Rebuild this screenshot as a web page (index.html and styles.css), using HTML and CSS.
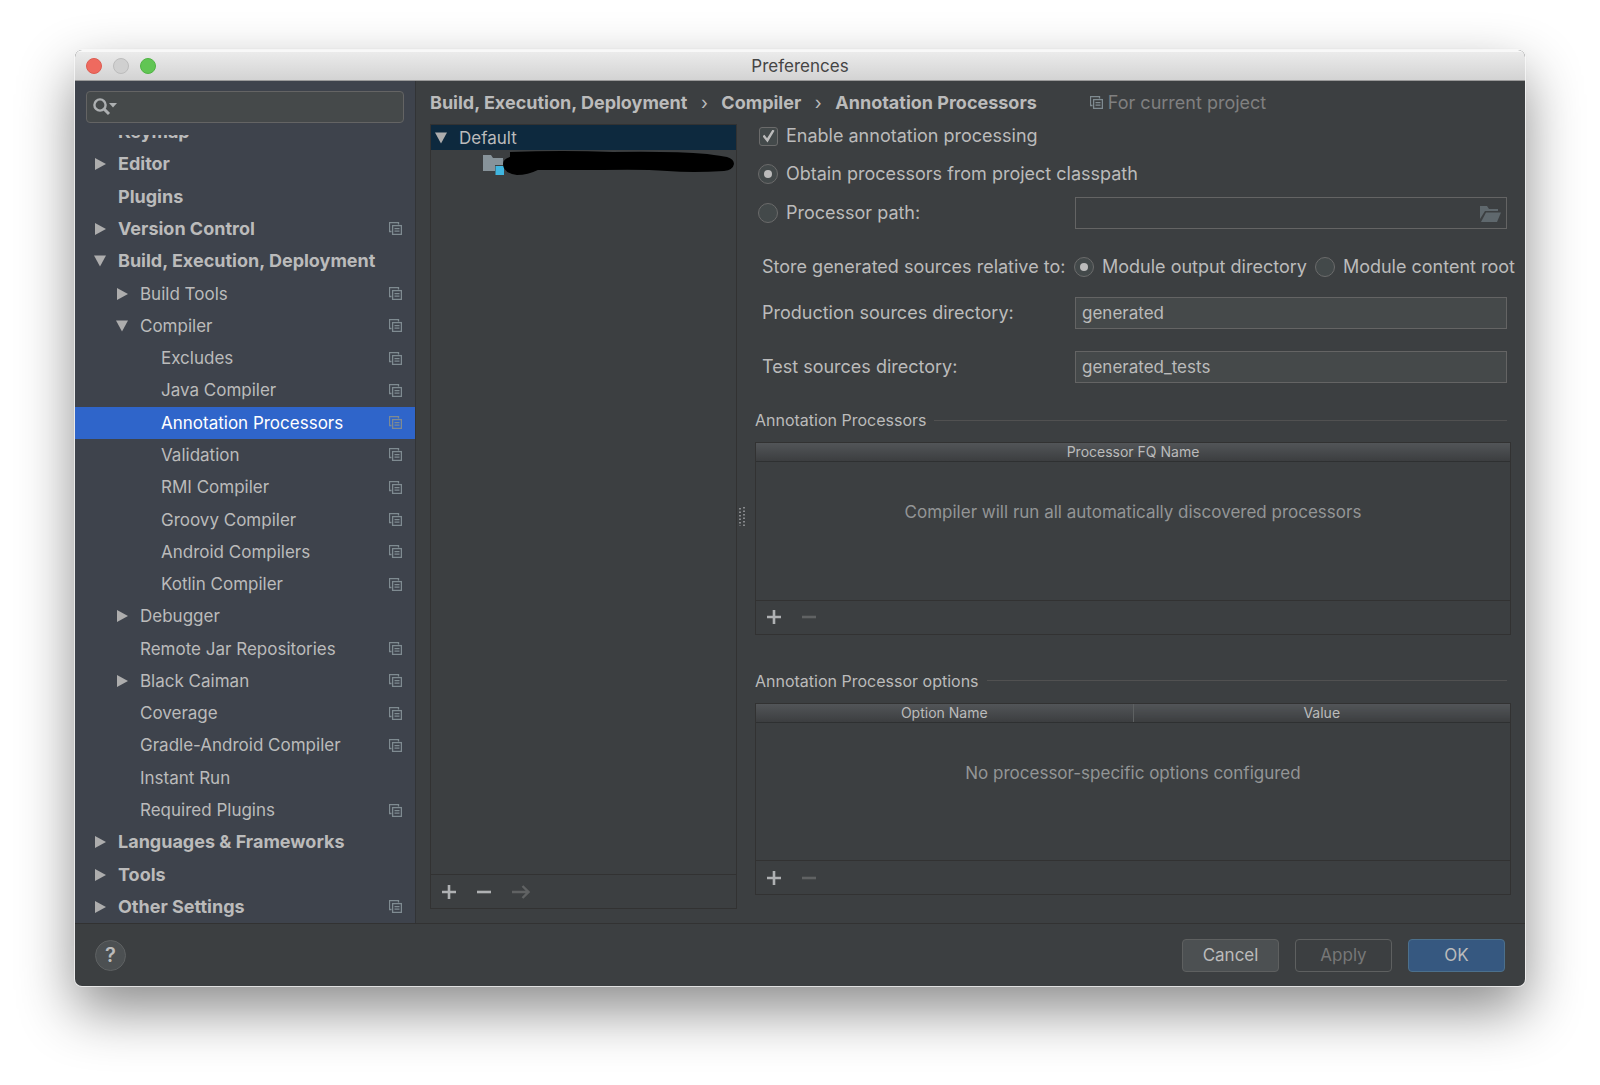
FILE: index.html
```html
<!DOCTYPE html>
<html lang="en">
<head>
<meta charset="utf-8">
<title>Preferences</title>
<link rel="stylesheet" href="styles.css">
</head>
<body>
<svg class="sprite" aria-hidden="true">
  <symbol id="copy" viewBox="0 0 13 13">
    <path d="M9.5 2.5V.5H.5v9h2" fill="none" stroke="currentColor" stroke-width="1.3"/>
    <rect x="3.6" y="3.6" width="8.8" height="8.8" fill="none" stroke="currentColor" stroke-width="1.3"/>
    <path d="M5.5 6.7h5M5.5 9.2h5" stroke="currentColor" stroke-width="1.2"/>
  </symbol>
  <symbol id="right" viewBox="0 0 12 12"><path d="M1 0l11 6-11 6z" fill="currentColor"/></symbol>
  <symbol id="down" viewBox="0 0 12 12"><path d="M0 .5h12L6 11.5z" fill="currentColor"/></symbol>
  <symbol id="plus" viewBox="0 0 14 14"><path d="M7 0v14M0 7h14" stroke="currentColor" stroke-width="2.6"/></symbol>
  <symbol id="minus" viewBox="0 0 14 14"><path d="M0 7h14" stroke="currentColor" stroke-width="2.6"/></symbol>
</svg>

<main class="window">
  <header class="titlebar">
    <div class="lights">
      <button class="light close" aria-label="Close"></button>
      <button class="light minimize" aria-label="Minimize" disabled></button>
      <button class="light maximize" aria-label="Zoom"></button>
    </div>
    <h1 class="title">Preferences</h1>
  </header>

  <div class="content">
    <nav class="sidebar">
      <label class="search">
        <svg class="search-icon" viewBox="0 0 24 18" aria-hidden="true">
          <circle cx="7" cy="7" r="5.6" fill="none" stroke="currentColor" stroke-width="2.4"/>
          <path d="M11 11l5 5" stroke="currentColor" stroke-width="3"/>
          <path d="M16 5h8l-4 4.5z" fill="currentColor"/>
        </svg>
        <input class="search-input" type="text" aria-label="Search settings">
      </label>
      <div class="tree-scroll">
        <ul class="tree">
          <li class="node top">Keymap</li>
          <li class="node top"><svg class="arrow"><use href="#right"/></svg>Editor</li>
          <li class="node top">Plugins</li>
          <li class="node top"><svg class="arrow"><use href="#right"/></svg>Version Control<svg class="scope"><use href="#copy"/></svg></li>
          <li class="node top"><svg class="arrow"><use href="#down"/></svg>Build, Execution, Deployment</li>
          <li class="node mid"><svg class="arrow"><use href="#right"/></svg>Build Tools<svg class="scope"><use href="#copy"/></svg></li>
          <li class="node mid"><svg class="arrow"><use href="#down"/></svg>Compiler<svg class="scope"><use href="#copy"/></svg></li>
          <li class="node leaf">Excludes<svg class="scope"><use href="#copy"/></svg></li>
          <li class="node leaf">Java Compiler<svg class="scope"><use href="#copy"/></svg></li>
          <li class="node leaf selected">Annotation Processors<svg class="scope"><use href="#copy"/></svg></li>
          <li class="node leaf">Validation<svg class="scope"><use href="#copy"/></svg></li>
          <li class="node leaf">RMI Compiler<svg class="scope"><use href="#copy"/></svg></li>
          <li class="node leaf">Groovy Compiler<svg class="scope"><use href="#copy"/></svg></li>
          <li class="node leaf">Android Compilers<svg class="scope"><use href="#copy"/></svg></li>
          <li class="node leaf">Kotlin Compiler<svg class="scope"><use href="#copy"/></svg></li>
          <li class="node mid"><svg class="arrow"><use href="#right"/></svg>Debugger</li>
          <li class="node mid">Remote Jar Repositories<svg class="scope"><use href="#copy"/></svg></li>
          <li class="node mid"><svg class="arrow"><use href="#right"/></svg>Black Caiman<svg class="scope"><use href="#copy"/></svg></li>
          <li class="node mid">Coverage<svg class="scope"><use href="#copy"/></svg></li>
          <li class="node mid">Gradle-Android Compiler<svg class="scope"><use href="#copy"/></svg></li>
          <li class="node mid">Instant Run</li>
          <li class="node mid">Required Plugins<svg class="scope"><use href="#copy"/></svg></li>
          <li class="node top"><svg class="arrow"><use href="#right"/></svg>Languages &amp; Frameworks</li>
          <li class="node top"><svg class="arrow"><use href="#right"/></svg>Tools</li>
          <li class="node top"><svg class="arrow"><use href="#right"/></svg>Other Settings<svg class="scope"><use href="#copy"/></svg></li>
        </ul>
      </div>
    </nav>

    <section class="page">
      <div class="crumbs">
        <span>Build, Execution, Deployment</span><span class="sep">›</span>
        <span>Compiler</span><span class="sep">›</span>
        <span>Annotation Processors</span>
        <span class="for-project"><svg class="scope-icon"><use href="#copy"/></svg>For current project</span>
      </div>

      <div class="columns">
        <div class="profiles">
          <div class="profile"><svg class="arrow-icon"><use href="#down"/></svg>Default</div>
          <div class="module">
            <svg class="module-icon" viewBox="0 0 22 20" aria-hidden="true">
              <path d="M0 0h8l2 3h10v7h-8v6H0z" fill="#87939a"/>
              <rect x="12.500" y="11" width="8.500" height="9" fill="#40b6e0"/>
            </svg>
            <svg class="redaction" viewBox="0 0 232 24" preserveAspectRatio="none" aria-hidden="true">
              <path d="M7 1Q60-1 110 1Q170 0 205 3Q220 5 225 6Q232 8 232 13Q231 19 222 20Q190 22 165 20Q140 18 100 19H35Q25 24 14 24Q0 22 0 13Q0 8 7 6z" fill="#000"/>
            </svg>
          </div>
          <div class="toolbar">
            <button class="tool" aria-label="Add profile"><svg class="tool-icon"><use href="#plus"/></svg></button>
            <button class="tool" aria-label="Remove profile"><svg class="tool-icon"><use href="#minus"/></svg></button>
            <button class="tool" aria-label="Move to" disabled><svg class="move-icon" viewBox="0 0 18 14"><path d="M0 7h16M10.500 1l6 6-6 6" fill="none" stroke="currentColor" stroke-width="2.400"/></svg></button>
          </div>
        </div>

        <div class="splitter"><svg class="grip" viewBox="0 0 6 20" aria-hidden="true"><path d="M1 1v18M5 0v20" stroke="#a0a3a5" stroke-width="1.500" stroke-dasharray="1.500 2"/></svg></div>

        <form class="form">
          <label class="choice enable"><input class="check" type="checkbox" checked>Enable annotation processing</label>
          <label class="choice obtain"><input class="radio" type="radio" name="source" checked>Obtain processors from project classpath</label>
          <div class="field path">
            <label class="choice"><input class="radio" type="radio" name="source">Processor path:</label>
            <div class="browse">
              <input class="text" type="text" aria-label="Processor path" disabled>
              <svg class="folder-icon" viewBox="0 0 21 16" aria-hidden="true"><path d="M0 0h7l2 3h9v2H5L0 13z" fill="#5f686d"/><path d="M6 6.500h15L17 16H1z" fill="#5f686d"/></svg>
            </div>
          </div>
          <div class="field store" role="group" aria-labelledby="store">
            <span class="caption" id="store">Store generated sources relative to:</span>
            <div class="options">
              <label class="choice"><input class="radio" type="radio" name="relative" checked>Module output directory</label>
              <label class="choice"><input class="radio" type="radio" name="relative">Module content root</label>
            </div>
          </div>
          <div class="field production">
            <label class="caption" for="production">Production sources directory:</label>
            <input class="text" id="production" type="text" value="generated">
          </div>
          <div class="field tests">
            <label class="caption" for="tests">Test sources directory:</label>
            <input class="text" id="tests" type="text" value="generated_tests">
          </div>

          <h2 class="group">Annotation Processors</h2>
          <div class="panel">
            <table class="grid">
              <thead><tr><th>Processor FQ Name</th></tr></thead>
              <tbody><tr><td>Compiler will run all automatically discovered processors</td></tr></tbody>
            </table>
            <div class="toolbar">
              <button class="tool" type="button" aria-label="Add processor"><svg class="tool-icon"><use href="#plus"/></svg></button>
              <button class="tool" type="button" aria-label="Remove processor" disabled><svg class="tool-icon"><use href="#minus"/></svg></button>
            </div>
          </div>

          <h2 class="group options-group">Annotation Processor options</h2>
          <div class="panel">
            <table class="grid">
              <thead><tr><th>Option Name</th><th>Value</th></tr></thead>
              <tbody><tr><td colspan="2">No processor-specific options configured</td></tr></tbody>
            </table>
            <div class="toolbar">
              <button class="tool" type="button" aria-label="Add option"><svg class="tool-icon"><use href="#plus"/></svg></button>
              <button class="tool" type="button" aria-label="Remove option" disabled><svg class="tool-icon"><use href="#minus"/></svg></button>
            </div>
          </div>
        </form>
      </div>
    </section>
  </div>

  <footer class="footer">
    <button class="help" aria-label="Help">?</button>
    <button class="button">Cancel</button>
    <button class="button" disabled>Apply</button>
    <button class="button primary">OK</button>
  </footer>
</main>
</body>
</html>
```

FILE: styles.css
```css
* { box-sizing: border-box; }

body {
  margin: 0;
  min-height: 100vh;
  padding: 50px 75px 99px;
  display: flex;
  background: #fff;
  color: #bbb;
  font: 17px/24px Inter, "Liberation Sans", sans-serif;
}

button, input {
  margin: 0;
  padding: 0;
  border: 0;
  background: none;
  color: inherit;
  font: inherit;
}

.sprite { position: absolute; width: 0; height: 0; }

.window {
  flex: 1;
  min-width: 0;
  display: flex;
  flex-direction: column;
  overflow: hidden;
  border-radius: 7px;
  background: #3c3f41;
  box-shadow: 0 0 0 1px rgba(255, 255, 255, .7), 0 0 2px rgba(0, 0, 0, .2), 0 24px 56px rgba(0, 0, 0, .46);
}

/* Title bar */
.titlebar {
  display: grid;
  grid-template-columns: 1fr auto 1fr;
  align-items: center;
  height: 31px;
  padding: 0 11px;
  border-top: 2px solid #f8f8f8;
  border-bottom: 1px solid #9a9a9a;
  background: linear-gradient(#ebebeb, #d3d3d3);
}
.lights { display: flex; gap: 11px; }
.light { width: 16px; height: 16px; border: 1px solid; border-radius: 50%; }
.close { background: #ee6a5f; border-color: #dd5c51; }
.minimize { background: #d0d0d0; border-color: #bcbcbc; }
.maximize { background: #61c554; border-color: #50b444; }
.title { margin: 0; color: #454545; font-size: 17px; font-weight: 400; }

.content { flex: 1; display: flex; }

/* Settings tree */
.sidebar {
  width: 341px;
  flex: none;
  display: flex;
  flex-direction: column;
  padding-top: 10px;
  border-right: 1px solid #323436;
  background: #3e434c;
}
.search {
  display: flex;
  align-items: center;
  height: 32px;
  margin: 0 11px 12px;
  padding: 0 6px;
  gap: 6px;
  border: 1px solid #646464;
  border-radius: 4px;
  background: #45494a;
}
.search-icon { width: 24px; height: 18px; color: #adb0b2; }
.search-input { flex: 1; min-width: 0; outline: 0; }
.tree-scroll { flex: 1; display: flex; flex-direction: column; overflow: hidden; }
.tree {
  flex: 1;
  display: flex;
  flex-direction: column;
  margin: -19px 0 0;
  padding: 0;
  list-style: none;
}
.node {
  flex: 1;
  display: flex;
  align-items: center;
  padding-right: 13px;
  min-height: 24px;
  white-space: nowrap;
}
.top { padding-left: 43px; font-size: 18px; font-weight: 700; }
.mid { padding-left: 65px; }
.leaf { padding-left: 86px; }
.selected { background: #2f65ca; color: #fff; }
.arrow { width: 12px; height: 12px; margin: 0 12px 0 -24px; color: #adadad; }
.scope { width: 13px; height: 13px; margin-left: auto; color: #7f8b91; }

/* Page */
.page { flex: 1; min-width: 0; display: flex; flex-direction: column; padding: 0 14px 14px 14px; }
.crumbs {
  display: flex;
  align-items: center;
  height: 43px;
  font-size: 18px;
  font-weight: 700;
  white-space: nowrap;
}
.sep { width: 34px; text-align: center; font-weight: 400; }
.for-project {
  display: flex;
  align-items: center;
  gap: 5px;
  margin-left: 53px;
  color: #808080;
  font-weight: 400;
}
.scope-icon { width: 13px; height: 13px; color: #7f8b91; }
.columns { flex: 1; display: flex; }

.profiles {
  width: 307px;
  flex: none;
  display: flex;
  flex-direction: column;
  border: 1px solid #323232;
}
.profile {
  display: flex;
  align-items: center;
  gap: 12px;
  height: 25px;
  padding-left: 4px;
  background: #0d293e;
}
.arrow-icon { width: 12px; height: 12px; color: #adadad; }
.module { flex: 1; display: flex; align-items: flex-start; padding: 1px 2px 0 52px; }
.module-icon { width: 22px; height: 20px; margin-top: 4px; flex: none; }
.redaction { flex: 1; min-width: 0; height: 24px; margin-left: -2px; }

.toolbar {
  display: flex;
  align-items: center;
  gap: 21px;
  height: 34px;
  padding-left: 11px;
  border-top: 1px solid #323232;
}
.tool { display: flex; color: #afb1b3; }
.tool:disabled { color: #606263; }
.tool-icon { width: 14px; height: 14px; }
.move-icon { width: 18px; height: 14px; }

.splitter { width: 18px; display: flex; align-items: center; padding-left: 2px; }
.grip { width: 6px; height: 20px; }

/* Form */
.form { flex: 1; min-width: 0; display: flex; flex-direction: column; }
.choice { display: flex; align-items: center; gap: 8px; white-space: nowrap; }
.choice, .caption { font-size: 18px; }
.check, .radio {
  appearance: none;
  flex: none;
  display: grid;
  place-items: center;
  border: 1px solid #6b6b6b;
  background: #43494a;
}
.check { width: 19px; height: 19px; border-radius: 3px; }
.radio { width: 20px; height: 20px; border-radius: 50%; }
.check:checked::after {
  content: "";
  width: 12px;
  height: 13px;
  background: #bbb;
  clip-path: polygon(0 52%, 16% 40%, 38% 68%, 84% 0, 100% 10%, 42% 100%);
}
.radio:checked::after { content: ""; width: 8px; height: 8px; border-radius: 50%; background: #bbb; }
.enable { height: 24px; margin-left: 4px; }
.obtain { height: 32px; margin: 10px 0 7px 3px; }
.field {
  display: grid;
  grid-template-columns: 313px 1fr;
  align-items: center;
  min-height: 32px;
  margin-right: 4px;
  padding-left: 7px;
  white-space: nowrap;
}
.path { grid-template-columns: 317px 1fr; padding-left: 3px; }
.store { grid-template-columns: 312px 1fr; margin: 22px 0 14px; }
.options { display: flex; gap: 8px; }
.tests { margin: 22px 4px 25px 0; }
.text {
  width: 100%;
  height: 32px;
  padding: 0 6px;
  border: 1px solid #646464;
  background: #45494a;
  outline: 0;
}
.text:disabled { background: #3c3f41; }
.browse { position: relative; }
.folder-icon { position: absolute; right: 6px; top: 9px; width: 21px; height: 16px; }

.group {
  display: flex;
  align-items: center;
  gap: 8px;
  margin: 0 4px 10px 0;
  font-size: 16px;
  font-weight: 400;
}
.group::after { content: ""; flex: 1; border-top: 1px solid #515151; }
.options-group { margin-top: 34px; }
.panel { border: 1px solid #323232; }
.grid { width: 100%; border-collapse: collapse; table-layout: fixed; }
.grid th {
  height: 18px;
  padding: 0;
  border-bottom: 1px solid #2e3031;
  background: linear-gradient(#525558, #3c3e40);
  font-size: 14px;
  font-weight: 400;
  line-height: 18px;
}
.grid th + th { border-left: 1px solid #5e6162; }
.grid td { height: 138px; padding: 26px 0 0; color: #939596; text-align: center; vertical-align: top; line-height: 48px; }

/* Footer */
.footer {
  display: flex;
  align-items: center;
  gap: 16px;
  height: 63px;
  padding: 0 20px;
  border-top: 1px solid #323232;
}
.help {
  width: 31px;
  height: 31px;
  margin-right: auto;
  border: 1px solid #5e6162;
  border-radius: 50%;
  background: #4c5052;
  font-size: 20px;
  font-weight: 600;
}
.button {
  width: 97px;
  height: 33px;
  border: 1px solid #5e6060;
  border-radius: 4px;
  background: #4c5052;
}
.button:disabled { background: none; color: #777; }
.primary { border-color: #4c708c; background: #365880; }
```
